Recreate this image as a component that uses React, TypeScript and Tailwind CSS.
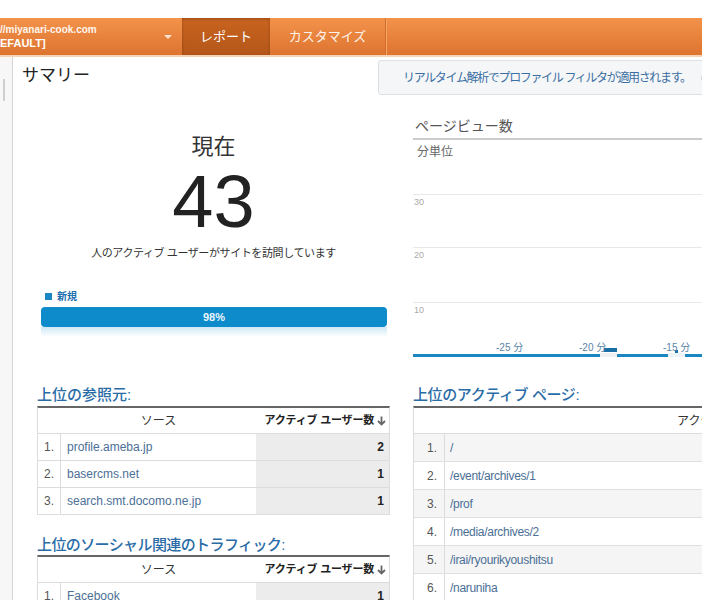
import React from "react";

const referrers: [string, number][] = [
  ["profile.ameba.jp", 2],
  ["basercms.net", 1],
  ["search.smt.docomo.ne.jp", 1],
];

const social: [string, number][] = [["Facebook", 1]];

const pages = [
  "/",
  "/event/archives/1",
  "/prof",
  "/media/archives/2",
  "/irai/ryourikyoushitsu",
  "/naruniha",
];

function SourceTable({ rows }: { rows: [string, number][] }) {
  return (
    <div className="w-[353px] border-t-2 border-[#666] border-x border-x-[#dcdcdc]">
      <div className="flex h-[26px] items-center border-b border-[#dcdcdc] bg-white text-[12px]">
        <div className="w-[218px] pl-[23px] text-center text-[#333]">ソース</div>
        <div className="flex flex-1 items-center justify-end gap-[3px] pr-[3px] font-bold text-[11px] tracking-[-0.2px] text-[#222]">
          アクティブ ユーザー数
          <svg width="9" height="10" viewBox="0 0 9 10" className="shrink-0">
            <path d="M4.5 0.5v8M1 5l3.5 3.5L8 5" fill="none" stroke="#666" strokeWidth="1.8" />
          </svg>
        </div>
      </div>
      {rows.map(([name, count], i) => (
        <div key={name} className="flex h-[27px] items-stretch border-b border-[#dcdcdc] text-[12px]">
          <div className="flex w-[23px] items-center justify-end border-r border-[#dcdcdc] pr-[6px] text-[#555]">
            {i + 1}.
          </div>
          <div className="flex w-[195px] items-center pl-[6px] text-[#4b6f96]">{name}</div>
          <div className="flex flex-1 items-center justify-end bg-[#ececec] pr-[5px] font-bold text-[#222]">
            {count}
          </div>
        </div>
      ))}
    </div>
  );
}

export default function App() {
  return (
    <div className="relative h-[600px] w-[702px] overflow-hidden bg-white font-['Liberation_Sans','Noto_Sans_CJK_JP',sans-serif] text-[#333]">
      <div className="h-[18px] bg-white" />

      {/* top nav */}
      <div className="flex h-[37px] bg-gradient-to-b from-[#f3924a] to-[#dd7430] text-white">
        <div className="relative w-[182px] shrink-0 pt-[6px]">
          <div className="text-[10px] font-bold leading-[12px] text-[#fff6ee]">//miyanari-cook.com</div>
          <div className="text-[11px] font-bold leading-[14px]">EFAULT]</div>
          <div className="absolute right-[10px] top-[17px] h-0 w-0 border-x-[4px] border-t-[4px] border-x-transparent border-t-[#fbe3d0]" />
        </div>
        <div className="flex w-[88px] shrink-0 items-center justify-center bg-gradient-to-b from-[#c9631f] to-[#b4571a] text-[13px] shadow-[inset_0_1px_3px_rgba(0,0,0,0.25)]">
          レポート
        </div>
        <div className="flex w-[115px] shrink-0 items-center justify-center text-[13px] text-[#fff3ea]">カスタマイズ</div>
        <div className="w-px bg-[#d36d2c]" />
        <div className="w-px bg-[#f6a565]" />
      </div>
      <div className="h-[2px] bg-[#f7d3b6]" />

      <div className="flex h-[543px]">
        <aside className="w-[13px] shrink-0 border-r border-[#d4d4d4] bg-[#f7f7f7]">
          <div className="ml-[3px] mt-[22px] h-[22px] w-[2px] bg-[#cfcfcf]" />
        </aside>

        <main className="min-w-0 flex-1 overflow-hidden">
          <div className="flex h-[38px] items-start">
            <div className="w-[365px] shrink-0 pl-[9px] pt-[7px] text-[17px] leading-[24px] text-[#222]">サマリー</div>
            <div className="mt-[3px] flex h-[35px] w-[340px] shrink-0 items-center whitespace-nowrap rounded-[3px] border border-[#dde1e5] bg-[#f4f6f8] pl-[24px] text-[12px] tracking-[-1.35px] text-[#3b6ea2]">
              リアルタイム解析でプロファイル フィルタが適用されます。
              <span className="ml-[10px] inline-block h-[12px] w-[12px] shrink-0 rounded-full bg-[#d8d8d8]" />
            </div>
          </div>

          <div className="flex">
            {/* left column */}
            <div className="ml-[24px] w-[353px] shrink-0 pt-[38px]">
              <div className="text-center text-[22px] leading-[28px] text-[#333]">現在</div>
              <div className="mt-[4px] text-center font-['Liberation_Sans',sans-serif] text-[74px] leading-[74px] text-[#222]">
                43
              </div>
              <div className="mt-[6px] text-center text-[11px] leading-[16px] tracking-[-0.4px] text-[#333]">
                人のアクティブ ユーザーがサイトを訪問しています
              </div>

              <div className="ml-[8px] mt-[28px] flex h-[14px] items-center gap-[5px] text-[10px] font-bold text-[#1b6fae]">
                <span className="inline-block h-[7px] w-[7px] bg-[#1a86c6]" />
                新規
              </div>
              <div className="ml-[4px] mt-[4px] w-[346px]">
                <div className="flex h-[20px] items-center justify-center rounded-[4px] bg-[#0e8bca] text-[11px] font-bold text-[#eaf6fc]">
                  98%
                </div>
                <div className="h-[10px] rounded-b-[4px] bg-gradient-to-b from-[#cfe8f5] to-white" />
              </div>

              <div className="mt-[48px] text-[15px] font-medium leading-[20px] text-[#2a6ca6]">上位の参照元:</div>
              <div className="mt-[1px]">
                <SourceTable rows={referrers} />
              </div>

              <div className="mt-[20px] text-[15px] font-medium leading-[20px] tracking-[-0.6px] text-[#2a6ca6]">
                上位のソーシャル関連のトラフィック:
              </div>
              <SourceTable rows={social} />
            </div>

            {/* right column */}
            <div className="ml-[23px] w-[300px] shrink-0 pt-[21px]">
              <div className="h-[24px] border-b-2 border-[#cccccc] pl-[2px] text-[14px] leading-[20px] text-[#555]">
                ページビュー数
              </div>
              <div className="mt-[4px] pl-[4px] text-[12px] leading-[16px] text-[#666]">分単位</div>
              <svg width="290" height="200" className="block">
                <line x1="0" x2="290" y1="34.5" y2="34.5" stroke="#e8e8e8" />
                <line x1="0" x2="290" y1="87.5" y2="87.5" stroke="#e8e8e8" />
                <line x1="0" x2="290" y1="142.5" y2="142.5" stroke="#e8e8e8" />
                <text x="1" y="45" fontSize="9" fill="#aaa" fontFamily="Liberation Sans">30</text>
                <text x="1" y="98" fontSize="9" fill="#aaa" fontFamily="Liberation Sans">20</text>
                <text x="1" y="153" fontSize="9" fill="#aaa" fontFamily="Liberation Sans">10</text>
                <rect x="0" y="194" width="290" height="3" fill="#1b87c2" />
                <rect x="187" y="193" width="17" height="4" fill="#eef2f5" />
                <rect x="191" y="188" width="13" height="4" fill="#1a6fa5" />
                <rect x="255" y="193" width="17" height="4" fill="#eef3f7" />
                <rect x="262" y="190" width="3" height="3" fill="#1a6fa5" />
                <text x="83" y="191" fontSize="10" fill="#5a84a8" fontFamily="Liberation Sans, Noto Sans CJK JP">-25 分</text>
                <text x="166" y="191" fontSize="10" fill="#5a84a8" fontFamily="Liberation Sans, Noto Sans CJK JP">-20 分</text>
                <text x="250" y="191" fontSize="10" fill="#5a84a8" fontFamily="Liberation Sans, Noto Sans CJK JP">-15 分</text>
              </svg>

              <div className="mt-[25px] text-[15px] font-medium leading-[20px] tracking-[-0.4px] text-[#2a6ca6]">
                上位のアクティブ ページ:
              </div>
              <div className="mt-[1px] w-[420px] border-t-2 border-[#666] border-l border-l-[#dcdcdc]">
                <div className="flex h-[26px] items-center border-b border-[#dcdcdc] text-[11px] font-bold">
                  <div className="w-[258px] shrink-0" />
                  <div className="whitespace-nowrap pl-[5px] font-normal text-[12px] text-[#333]">アクティブ ユーザー数</div>
                </div>
                {pages.map((p, i) => (
                  <div
                    key={p}
                    className={`flex h-[28px] border-b border-[#e0e0e0] text-[12px] ${i % 2 === 0 ? "bg-[#f5f5f5]" : "bg-white"}`}
                  >
                    <div className="flex w-[31px] shrink-0 items-center justify-end border-r border-[#dcdcdc] pr-[7px] text-[#555]">
                      {i + 1}.
                    </div>
                    <div className="flex items-center pl-[5px] tracking-[-0.3px] text-[#4b6f96]">{p}</div>
                  </div>
                ))}
              </div>
            </div>
          </div>
        </main>
      </div>
    </div>
  );
}
